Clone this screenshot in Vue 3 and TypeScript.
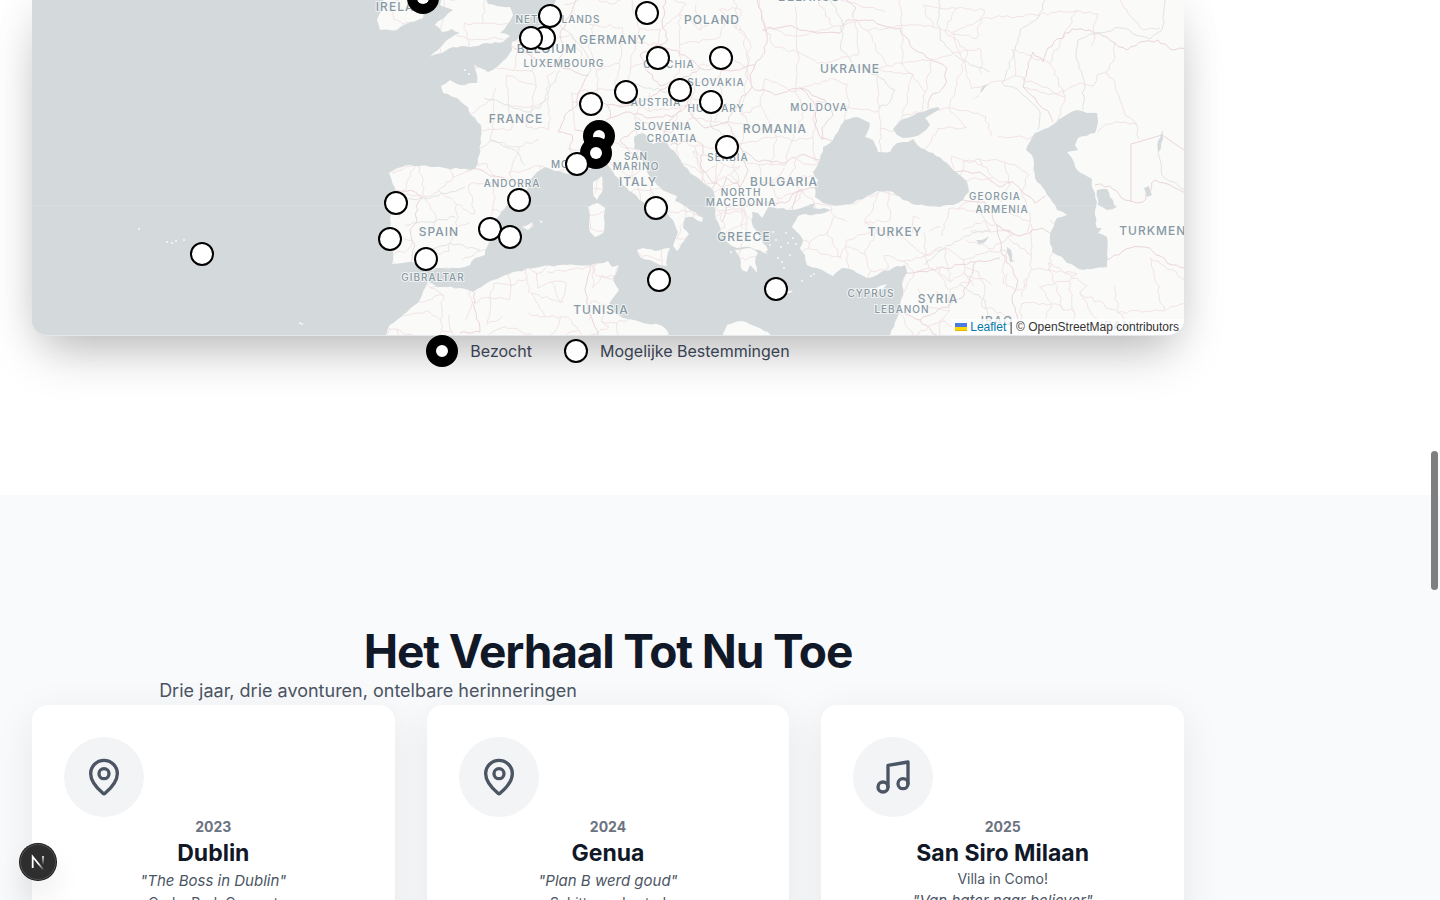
<script setup lang="ts">
type Point = [number, number]

interface MapLabel {
  text: string
  x: number
  y: number
  size: 'large' | 'small'
}

interface Stop {
  year: string
  city: string
  icon: 'pin' | 'music'
  lines: { text: string; quote: boolean }[]
}

let seed = 41
const random = (): number => {
  seed = (seed * 16807) % 2147483647
  return seed / 2147483647
}

const parse = (source: string): Point[] =>
  source.split(' ').map((pair) => pair.split(',').map(Number) as Point)

/** Subdivides each leg and nudges the new points sideways, for a natural shoreline. */
const roughen = (points: Point[], amount: number, step: number): Point[] => {
  const result: Point[] = []
  points.forEach((start, index) => {
    result.push(start)
    const end = points[index + 1]
    if (!end) return
    const dx = end[0] - start[0]
    const dy = end[1] - start[1]
    const length = Math.hypot(dx, dy) || 1
    const parts = Math.floor(length / step)
    for (let i = 1; i < parts; i++) {
      const t = i / parts
      const shift = (random() - 0.5) * 2 * amount
      result.push([start[0] + dx * t - (dy / length) * shift, start[1] + dy * t + (dx / length) * shift])
    }
  })
  return result
}

const toPath = (points: Point[], closed: boolean): string =>
  'M' + points.map(([x, y]) => `${x.toFixed(1)} ${y.toFixed(1)}`).join('L') + (closed ? 'Z' : '')

const shape = (source: string): string => toPath(roughen(parse(source), 1, 4), true)
const line = (source: string): string => toPath(roughen(parse(source), 1.6, 4), false)

const land = [
  // mainland Europe and western Asia
  '556,-4 552,10 545,22 536,30 524,36 512,42 512,50 503,61 497,67 488,72 480,68 474,65 477,75 477,83 460,85 450,80 441,86 443,93 457,98 468,107 471,115 481,125 481,143 478,163 475,169 460,169 430,167 410,165 398,168 389,173 391,178 395,188 393,202 391,214 390,228 388,238 393,252 392,264 403,263 413,262 420,267 428,271 440,268 460,268 470,265 475,258 485,255 487,247 493,238 488,228 497,218 507,205 520,195 528,188 530,180 537,172 545,167 555,171 567,174 580,170 588,163 596,160 605,163 613,172 623,185 633,193 643,202 657,209 667,213 673,220 678,232 673,246 677,251 684,241 689,234 683,228 685,218 693,217 702,222 703,218 695,212 683,205 675,201 677,196 667,192 657,185 650,177 646,168 642,160 640,150 634,149 634,137 643,133 653,144 664,141 677,155 690,173 703,183 713,190 715,202 715,215 720,227 727,242 737,248 750,247 765,252 768,250 763,243 758,235 752,224 752,212 758,213 762,218 765,213 768,207 783,208 792,210 798,209 804,207 815,203 812,212 798,216 792,227 797,232 803,240 800,248 805,255 807,265 817,268 827,273 833,276 842,268 853,270 867,278 880,273 893,268 905,265 907,273 902,282 903,295 900,308 895,322 889,340 1190,340 1190,-4',
  // Great Britain and Ireland
  '442,-4 440,5 453,10 445,17 435,25 442,32 452,29 460,33 447,40 438,50 430,57 442,53 453,47 470,47 487,43 503,42 510,36 500,33 507,25 513,15 510,7 488,4 485,-4',
  '383,-4 382,10 377,20 380,30 397,30 410,22 423,18 424,-4',
  // Mediterranean islands
  '593,182 602,176 602,192 597,200 593,195',
  '588,207 598,203 605,208 604,232 595,237 590,232 590,215',
  '637,250 643,248 655,251 670,248 667,258 667,266 660,265 650,260 640,257',
  '522,227 532,222 533,226 528,230',
  '539,220 543,222 541,223',
  '735,250 750,248 758,253 755,262 757,273 750,265 747,272 742,270 740,258',
  '755,242 763,249 768,254 762,252',
  '768,289 780,291 793,291 790,293 776,293',
  '867,290 876,288 887,284 882,290 873,293',
  // North Africa
  '383,340 390,325 407,312 418,303 425,288 428,282 437,287 460,288 473,292 493,280 513,272 540,267 567,265 590,265 608,261 612,267 619,265 613,278 619,290 610,302 608,308 623,318 643,323 660,325 668,332 669,340',
  '721,340 727,325 742,321 757,327 768,332 772,340',
].map(shape)

const seas = [
  // Black Sea and Azov
  '840,127 845,120 857,117 870,123 867,133 865,137 873,140 878,152 890,152 897,143 908,142 913,139 921,148 933,153 947,163 956,172 967,182 969,192 963,200 953,205 940,207 917,205 903,200 893,192 877,191 867,196 853,203 837,206 823,203 815,197 815,187 818,180 813,172 820,160 823,147 833,140 840,127',
  '893,129 899,122 903,119 917,113 938,107 940,109 930,115 925,118 930,125 922,133 913,137 903,138 897,135 893,129',
  // Marmara
  '803,211 812,208 824,208 831,210 820,214 808,215 803,211',
  // Caspian
  '1035,133 1048,128 1063,117 1077,110 1087,113 1097,113 1098,122 1095,133 1078,138 1075,145 1078,150 1067,152 1072,158 1078,171 1092,179 1092,187 1095,193 1097,202 1095,215 1097,228 1102,228 1098,233 1107,237 1107,267 1083,270 1067,263 1062,257 1052,252 1050,235 1057,218 1067,215 1057,210 1050,198 1035,178 1034,165 1032,155 1026,150 1035,133',
  '1097,190 1107,189 1110,197 1117,207 1107,210 1098,205 1097,190',
  // inland lakes
  '1144,188 1149,186 1152,195 1147,197 1144,188',
  '976,240 982,240 989,236 984,243 979,244 976,240',
  '1007,247 1011,250 1012,260 1015,261 1010,262 1007,247',
  '1163,130 1158,141 1158,153 1161,148 1163,130',
  '971,100 978,97 988,84 983,86 977,97',
].map(shape)

const borders = [
  '475,169 495,176 515,183 531,183',
  '395,190 415,192 422,198 416,206 417,222 410,230 415,245 412,255 410,263',
  '512,46 530,55 545,62 560,67 575,72 588,75 580,90 577,105 565,115 558,132 572,135 570,150 576,170',
  '577,-2 566,20 560,35 564,50 558,64',
  '577,106 590,100 607,105 610,118 600,125 585,132 575,130',
  '607,105 625,106 645,100 660,90 675,85 690,95 685,108 675,115 650,118 630,112 610,118',
  '640,55 660,45 685,55 700,68 680,80 660,86 648,72 640,55',
  '665,-2 662,20 668,40 660,45',
  '757,0 767,35 765,52 755,65 735,70 700,68',
  '762,30 787,26 813,32 840,33 847,20 873,20 887,27 900,28 910,45 933,61 947,68 945,85 930,98 928,108',
  '844,-2 856,8 853,18',
  '755,65 750,75 752,87 775,95 800,88 815,105 815,125 821,138 832,141',
  '800,88 825,100 833,115 822,128 822,140',
  '752,87 740,100 728,122 705,128 690,112',
  '740,147 755,160 785,163 800,155 820,160',
  '675,115 668,125 660,138',
  '670,145 690,140 703,145 700,165 712,182 722,188 726,178 740,187 742,205 726,207 722,222',
  '728,124 740,147 748,170 740,187',
  '742,205 765,203 785,203 800,190 815,188',
  '792,210 795,200 800,190',
  '1053,122 1050,115 1035,98 1023,87 1028,63 1033,52 1043,62 1048,48 1072,29 1090,30 1107,37 1115,43 1127,50 1140,42 1158,40 1172,50 1188,47',
  '1095,185 1110,186 1125,200 1143,202 1155,180 1170,185 1188,193',
  '955,172 980,172 1000,187 1012,182 1035,203 1045,196',
  '963,200 985,202 997,225 1001,250 1018,280 1012,300 1018,320 1030,338',
  '905,273 935,270 975,262 1000,258',
  '975,262 962,298 920,320 903,312',
  '920,320 940,338',
  '1107,260 1130,248 1145,247 1160,256 1172,265 1188,270',
  '998,226 1020,236 1042,228 1052,235',
  '475,292 475,310 480,332 460,333',
  '590,265 586,285 588,310 598,335',
  '640,160 620,140 635,130',
].map(line)

/** Province lines: a jittered grid of nodes with some of its edges left out. */
const buildRegions = (): string => {
  const parts: string[] = []
  const addGrid = (x0: number, y0: number, x1: number, y1: number, cell: number, keep: number) => {
    const cols = Math.ceil((x1 - x0) / cell)
    const rows = Math.ceil((y1 - y0) / cell)
    const nodes: Point[][] = []
    for (let r = 0; r <= rows; r++) {
      nodes.push([])
      for (let c = 0; c <= cols; c++) {
        nodes[r].push([
          x0 + c * cell + (random() - 0.5) * cell * 0.9,
          y0 + r * cell + (random() - 0.5) * cell * 0.9,
        ])
      }
    }
    for (let r = 0; r <= rows; r++) {
      for (let c = 0; c <= cols; c++) {
        if (c < cols && random() < keep) parts.push(toPath(roughen([nodes[r][c], nodes[r][c + 1]], 1.8, 4), false))
        if (r < rows && random() < keep) parts.push(toPath(roughen([nodes[r][c], nodes[r + 1][c]], 1.8, 4), false))
      }
    }
  }
  addGrid(385, 0, 740, 265, 21, 0.66)
  addGrid(740, 0, 960, 160, 27, 0.66)
  addGrid(700, 160, 1020, 280, 19, 0.6)
  addGrid(385, 266, 680, 335, 17, 0.6)
  addGrid(970, 0, 1100, 120, 46, 0.5)
  addGrid(900, 225, 1060, 335, 21, 0.6)
  addGrid(1060, 272, 1184, 335, 32, 0.6)
  return parts.join('')
}
const regions = buildRegions()

const steppeLines = [
  '1023,87 1040,92 1058,94 1080,83 1093,86 1097,75 1107,73 1115,82 1120,100 1125,115 1137,125 1139,139',
  '1115,43 1113,62 1105,72',
  '1097,132 1107,124 1125,122 1137,125',
  '1120,0 1134,20 1143,30 1160,28',
].map(line)

const uzbekBorder = 'M1131 202V144L1162 135L1184 150'

const rivers = [
  '830,0 842,20 841,50 855,66 880,78 895,90 890,102 878,108',
  '940,-2 938,20 940,40 955,55 975,66 990,72',
  '1045,0 1038,18 1020,30 1015,50 1002,83 1020,92 1040,112 1038,130',
  '1083,110 1084,80 1076,55 1078,40 1090,34 1120,28 1150,39 1162,30 1165,0',
  '588,75 592,60 575,40 560,25',
  '620,82 650,88 690,96 710,105 712,128 740,145',
  '395,199 430,198 450,192 465,187',
  '405,225 430,222 455,217',
  '425,250 450,243 480,250',
  '484,98 510,105 525,112 540,108 560,70',
  '490,140 515,150 525,165',
  '1158,153 1162,175 1185,190',
  '925,265 940,250 965,236 990,230',
  '960,285 985,300 990,320 1015,335',
].map(line)

const islets: Point[] = [
  [139, 229], [167, 242], [172, 243], [176, 241], [184, 240], [300, 323], [302, 324],
  [773, 232], [776, 240], [781, 247], [788, 243], [793, 238], [796, 244], [782, 262], [790, 255],
  [784, 268], [778, 258], [802, 281], [811, 276], [814, 274], [731, 252], [725, 240], [770, 245],
  [786, 233], [795, 227], [465, 70], [469, 74],
]

const labels: MapLabel[] = [
  { text: 'IRELAND', x: 405, y: 11, size: 'large' },
  { text: 'NETHERLANDS', x: 558, y: 23, size: 'small' },
  { text: 'BELGIUM', x: 547, y: 53, size: 'large' },
  { text: 'GERMANY', x: 613, y: 44, size: 'large' },
  { text: 'LUXEMBOURG', x: 564, y: 67, size: 'small' },
  { text: 'POLAND', x: 712, y: 24, size: 'large' },
  { text: 'BELARUS', x: 809, y: 1, size: 'large' },
  { text: 'CZECHIA', x: 669, y: 68, size: 'small' },
  { text: 'SLOVAKIA', x: 716, y: 86, size: 'small' },
  { text: 'AUSTRIA', x: 656, y: 106, size: 'small' },
  { text: 'HUNGARY', x: 716, y: 112, size: 'small' },
  { text: 'UKRAINE', x: 850, y: 73, size: 'large' },
  { text: 'MOLDOVA', x: 819, y: 111, size: 'small' },
  { text: 'FRANCE', x: 516, y: 123, size: 'large' },
  { text: 'SLOVENIA', x: 663, y: 130, size: 'small' },
  { text: 'CROATIA', x: 672, y: 142, size: 'small' },
  { text: 'ROMANIA', x: 775, y: 133, size: 'large' },
  { text: 'SERBIA', x: 728, y: 161, size: 'small' },
  { text: 'MONACO', x: 577, y: 168, size: 'small' },
  { text: 'SAN', x: 636, y: 160, size: 'small' },
  { text: 'MARINO', x: 636, y: 170, size: 'small' },
  { text: 'ITALY', x: 638, y: 186, size: 'large' },
  { text: 'BULGARIA', x: 784, y: 186, size: 'large' },
  { text: 'NORTH', x: 741, y: 196, size: 'small' },
  { text: 'MACEDONIA', x: 741, y: 206, size: 'small' },
  { text: 'ANDORRA', x: 512, y: 187, size: 'small' },
  { text: 'SPAIN', x: 439, y: 236, size: 'large' },
  { text: 'GIBRALTAR', x: 433, y: 281, size: 'small' },
  { text: 'TUNISIA', x: 601, y: 314, size: 'large' },
  { text: 'GREECE', x: 744, y: 241, size: 'large' },
  { text: 'TURKEY', x: 895, y: 236, size: 'large' },
  { text: 'CYPRUS', x: 871, y: 297, size: 'small' },
  { text: 'LEBANON', x: 902, y: 313, size: 'small' },
  { text: 'SYRIA', x: 938, y: 303, size: 'large' },
  { text: 'GEORGIA', x: 995, y: 200, size: 'small' },
  { text: 'ARMENIA', x: 1002, y: 213, size: 'small' },
  { text: 'TURKMENISTAN', x: 1173, y: 235, size: 'large' },
  { text: 'IRAQ', x: 997, y: 325, size: 'large' },
  { text: 'IRAN', x: 1116, y: 330, size: 'large' },
]

const possible: Point[] = [
  [550, 16], [647, 13], [544, 38], [531, 38], [658, 58], [721, 58], [680, 90], [626, 92],
  [711, 102], [591, 104], [727, 147], [577, 164], [396, 203], [519, 200], [656, 208], [490, 229],
  [510, 237], [390, 239], [426, 259], [202, 254], [659, 280], [776, 289],
]
const visited: Point[] = [[423, -2], [599, 136], [596, 153]]

const stops: Stop[] = [
  {
    year: '2023',
    city: 'Dublin',
    icon: 'pin',
    lines: [
      { text: '"The Boss in Dublin"', quote: true },
      { text: 'Croke Park Concert', quote: false },
    ],
  },
  {
    year: '2024',
    city: 'Genua',
    icon: 'pin',
    lines: [
      { text: '"Plan B werd goud"', quote: true },
      { text: 'Schitterende stad', quote: false },
    ],
  },
  {
    year: '2025',
    city: 'San Siro Milaan',
    icon: 'music',
    lines: [
      { text: 'Villa in Como!', quote: false },
      { text: '"Van hater naar believer"', quote: true },
    ],
  },
]
</script>

<template>
  <div class="page">
    <section class="destinations">
      <div class="map">
        <svg class="map-canvas" viewBox="32 0 1152 335" role="img" aria-label="Kaart van Europa">
          <defs>
            <clipPath id="land-area">
              <path v-for="(d, i) in land" :key="i" :d="d" />
            </clipPath>
          </defs>
          <rect class="sea" x="32" y="0" width="1152" height="335" />
          <path v-for="(d, i) in land" :key="`land-${i}`" class="land" :d="d" />
          <circle v-for="([x, y], i) in islets" :key="`islet-${i}`" class="land" :cx="x" :cy="y" r="1" />
          <g clip-path="url(#land-area)">
            <path class="region" :d="regions" />
            <path v-for="(d, i) in steppeLines" :key="`steppe-${i}`" class="region" :d="d" />
            <path v-for="(d, i) in rivers" :key="`river-${i}`" class="river" :d="d" />
            <path v-for="(d, i) in borders" :key="`border-${i}`" class="border" :d="d" />
            <path class="border" :d="uzbekBorder" />
          </g>
          <path v-for="(d, i) in seas" :key="`sea-${i}`" class="sea" :d="d" />
          <path class="tile-seam" d="M32 206H1184" />
          <text
            v-for="label in labels"
            :key="label.text"
            :x="label.x"
            :y="label.y"
            :class="['label', `label-${label.size}`]"
          >{{ label.text }}</text>
          <g v-for="([x, y], i) in visited" :key="`visited-${i}`">
            <circle :cx="x" :cy="y" r="16" fill="#000" />
            <circle :cx="x" :cy="y" r="6" fill="#fff" />
          </g>
          <circle
            v-for="([x, y], i) in possible"
            :key="`possible-${i}`"
            :cx="x"
            :cy="y"
            r="11"
            fill="#fff"
            stroke="#000"
            stroke-width="2"
          />
        </svg>
        <div class="attribution">
          <svg class="flag" viewBox="0 0 12 8" aria-hidden="true">
            <path fill="#4c7be1" d="M0 0h12v4H0z" />
            <path fill="#ffd500" d="M0 4h12v3H0z" />
            <path fill="#e0bc00" d="M0 7h12v1H0z" />
          </svg>
          <a href="#leaflet">Leaflet</a> <span>|</span> © OpenStreetMap contributors
        </div>
      </div>
      <div class="legend">
        <div class="legend-item">
          <span class="dot dot-visited"></span>
          <span>Bezocht</span>
        </div>
        <div class="legend-item">
          <span class="dot dot-possible"></span>
          <span>Mogelijke Bestemmingen</span>
        </div>
      </div>
    </section>

    <section class="story">
      <div class="story-inner">
        <h2>Het Verhaal Tot Nu Toe</h2>
        <p class="intro">Drie jaar, drie avonturen, ontelbare herinneringen</p>
        <div class="cards">
          <article v-for="stop in stops" :key="stop.year" class="card">
            <div class="card-icon">
              <svg v-if="stop.icon === 'pin'" viewBox="0 0 24 24" aria-hidden="true">
                <path
                  d="M20 10c0 4.993-5.539 10.193-7.399 11.799a1 1 0 0 1-1.202 0C9.539 20.193 4 14.993 4 10a8 8 0 0 1 16 0"
                />
                <circle cx="12" cy="10" r="3" />
              </svg>
              <svg v-else viewBox="0 0 24 24" aria-hidden="true">
                <path d="M9 18V5l12-2v13" />
                <circle cx="6" cy="18" r="3" />
                <circle cx="18" cy="16" r="3" />
              </svg>
            </div>
            <div class="year">{{ stop.year }}</div>
            <h3>{{ stop.city }}</h3>
            <p v-for="entry in stop.lines" :key="entry.text" :class="entry.quote ? 'quote' : 'detail'">
              {{ entry.text }}
            </p>
          </article>
        </div>
      </div>
    </section>

    <button class="dev-badge" type="button" aria-label="Next.js">
      <svg viewBox="0 0 36 36" aria-hidden="true">
        <defs>
          <linearGradient id="fade-diagonal" x1="19" y1="19" x2="24" y2="26" gradientUnits="userSpaceOnUse">
            <stop offset="0" stop-color="#fff" />
            <stop offset="1" stop-color="#fff" stop-opacity="0" />
          </linearGradient>
          <linearGradient id="fade-stem" x1="23" y1="12" x2="23" y2="21" gradientUnits="userSpaceOnUse">
            <stop offset="0" stop-color="#fff" />
            <stop offset="1" stop-color="#fff" stop-opacity="0" />
          </linearGradient>
        </defs>
        <path d="M12.7 24V12.8L23.6 26" fill="none" stroke="url(#fade-diagonal)" stroke-width="1.8" />
        <path d="M23 12v9" fill="none" stroke="url(#fade-stem)" stroke-width="1.6" />
      </svg>
    </button>
    <div class="scroll-thumb" aria-hidden="true"></div>
  </div>
</template>

<style>
body {
  margin: 0;
}
</style>

<style scoped>
.page {
  height: 100vh;
  overflow: hidden;
  background: #fff;
  color: #111827;
  font-family: Inter, "Liberation Sans", sans-serif;
}

.destinations,
.story-inner {
  box-sizing: border-box;
  max-width: 1216px;
  padding: 0 32px;
}

.destinations {
  padding-bottom: 129px;
}

.map {
  position: relative;
  overflow: hidden;
  border-bottom: 1px solid #e5e7eb;
  border-radius: 0 0 16px 16px;
  background: #d4dadc;
  box-shadow: 0 25px 50px -12px rgba(0, 0, 0, 0.25), 0 0 40px rgba(0, 0, 0, 0.08);
}

.map-canvas {
  display: block;
  width: 100%;
  height: auto;
}

.sea {
  fill: #d4dadc;
}

.land {
  fill: #fafaf8;
}

.region,
.river,
.border {
  fill: none;
  stroke-linejoin: round;
}

.region {
  stroke: #f2e3e5;
  stroke-width: 1;
}

.river {
  stroke: #e0e4e6;
  stroke-width: 1;
}

.border {
  stroke: #ebd5d9;
  stroke-width: 1;
}

.tile-seam {
  stroke: #fff;
  stroke-opacity: 0.15;
}

.label {
  fill: #8799a6;
  stroke: #fafaf8;
  stroke-opacity: 0.8;
  stroke-width: 2px;
  stroke-linejoin: round;
  paint-order: stroke;
  text-anchor: middle;
  font-weight: 500;
  letter-spacing: 1px;
}

.label-large {
  font-size: 12px;
}

.label-small {
  font-size: 10px;
}

.attribution {
  position: absolute;
  right: 0;
  bottom: 0;
  padding: 0 5px 0 3px;
  background: rgba(255, 255, 255, 0.8);
  color: #333;
  font: 12px/16px "Liberation Sans", Arial, sans-serif;
}

.attribution a {
  color: #0078a8;
  text-decoration: none;
}

.flag {
  width: 12px;
  height: 8px;
  margin-right: 3px;
}

.legend {
  position: relative;
  display: flex;
  justify-content: center;
  gap: 32px;
}

.legend-item {
  display: flex;
  align-items: center;
  gap: 12px;
  height: 30px;
  color: #374151;
  font-size: 16px;
  line-height: 24px;
}

.dot {
  box-sizing: border-box;
  border-radius: 50%;
  background: #fff;
}

.dot-visited {
  width: 32px;
  height: 32px;
  border: 10px solid #000;
}

.dot-possible {
  width: 24px;
  height: 24px;
  border: 2px solid #000;
}

.story {
  padding-top: 130px;
  background: #f9fafc;
}

h2,
h3,
p {
  margin: 0;
}

h2 {
  font-size: 46px;
  font-weight: 700;
  line-height: 52px;
  letter-spacing: -0.025em;
  text-align: center;
}

.intro {
  max-width: 672px;
  color: #4b5563;
  font-size: 18px;
  line-height: 28px;
  text-align: center;
}

.cards {
  display: grid;
  grid-template-columns: repeat(3, 1fr);
  gap: 32px;
  padding-bottom: 128px;
}

.card {
  padding: 32px;
  border-radius: 16px;
  background: #fff;
  box-shadow: 0 10px 40px rgba(0, 0, 0, 0.08);
  text-align: center;
}

.card-icon {
  display: flex;
  align-items: center;
  justify-content: center;
  width: 80px;
  height: 80px;
  border-radius: 50%;
  background: #f3f4f6;
}

.card-icon svg {
  width: 40px;
  height: 40px;
  fill: none;
  stroke: #4b5563;
  stroke-width: 2;
  stroke-linecap: round;
  stroke-linejoin: round;
}

.year {
  color: #6b7280;
  font-size: 14px;
  font-weight: 700;
  line-height: 20px;
}

h3 {
  font-size: 23px;
  font-weight: 700;
  line-height: 32px;
}

.quote {
  color: #4b5563;
  font-size: 15px;
  font-style: italic;
  line-height: 24px;
}

.detail {
  color: #4b5563;
  font-size: 14px;
  line-height: 20px;
}

.dev-badge {
  position: fixed;
  bottom: 20px;
  left: 20px;
  width: 36px;
  height: 36px;
  padding: 0;
  border: 0;
  border-radius: 50%;
  background: #2e2e2e;
  box-shadow: 0 0 0 1px #171717, inset 0 0 0 1px #4d4d4d, 0 16px 32px -8px rgba(0, 0, 0, 0.24);
}

.dev-badge svg {
  display: block;
  width: 36px;
  height: 36px;
}

.scroll-thumb {
  position: fixed;
  top: 451px;
  right: 2px;
  width: 7px;
  height: 139px;
  border-radius: 4px;
  background: #7f7f7f;
}
</style>
